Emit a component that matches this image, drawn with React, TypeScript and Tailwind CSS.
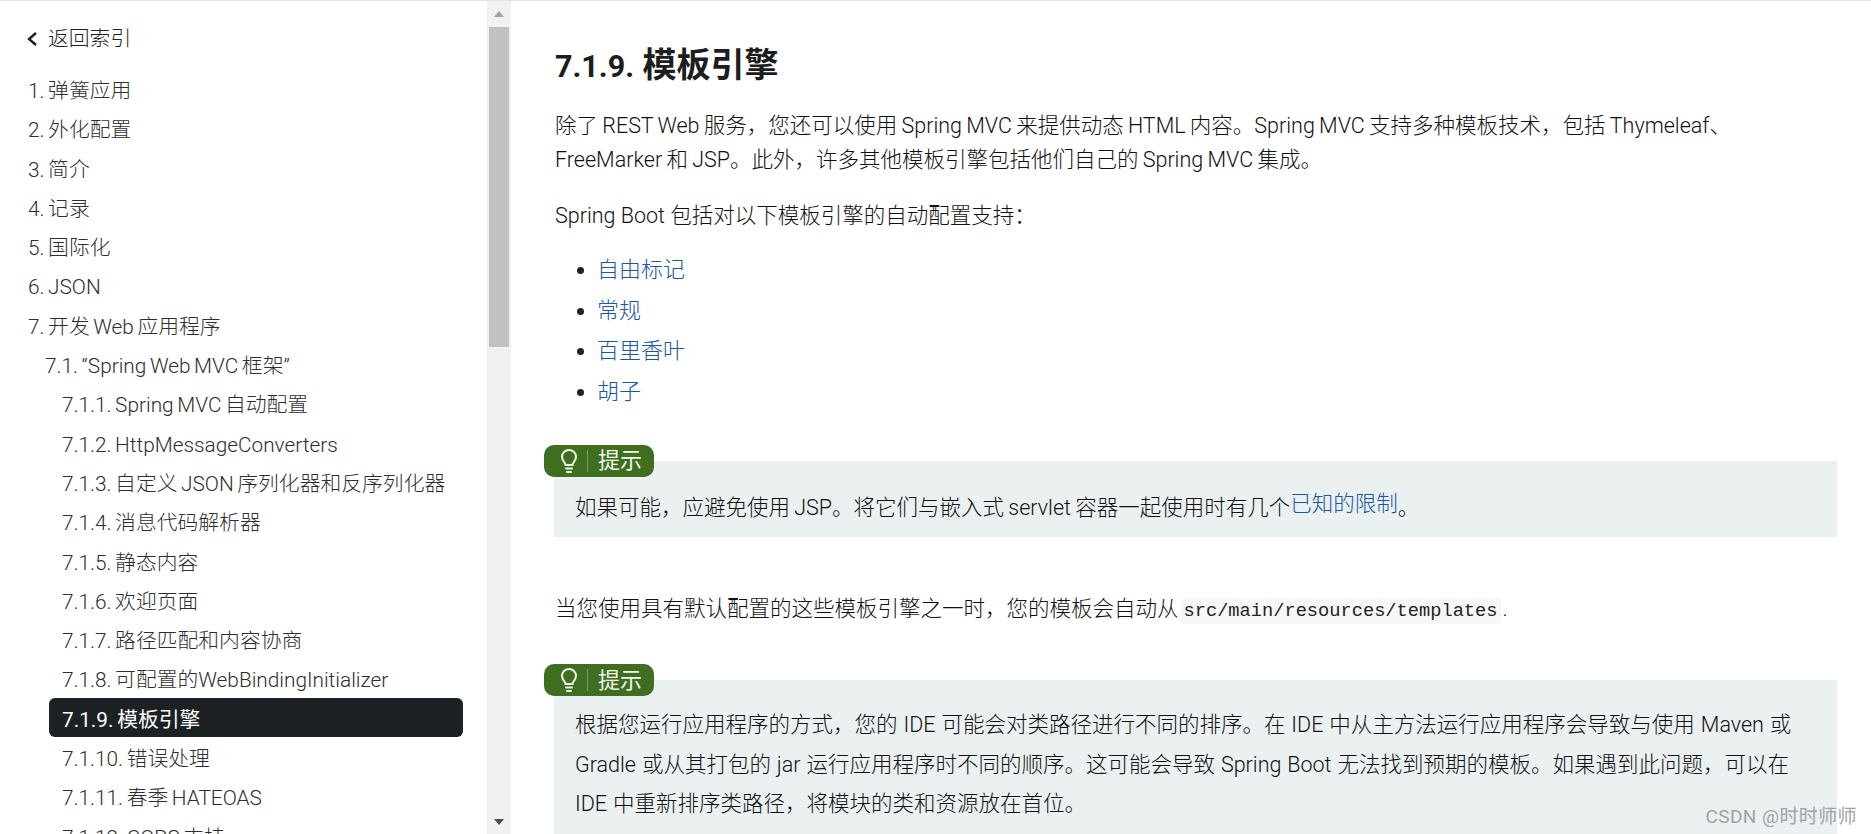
import { FC, ReactNode } from 'react';

const FONT = 'font-["Roboto","Noto_Sans_CJK_SC",sans-serif]';
const LINK = 'font-light text-[#1a55a6]';

type NavItem = { label: string; level: 0 | 1 | 2; active?: boolean };

const navItems: NavItem[] = [
  { label: '1. 弹簧应用', level: 0 },
  { label: '2. 外化配置', level: 0 },
  { label: '3. 简介', level: 0 },
  { label: '4. 记录', level: 0 },
  { label: '5. 国际化', level: 0 },
  { label: '6. JSON', level: 0 },
  { label: '7. 开发 Web 应用程序', level: 0 },
  { label: '7.1. “Spring Web MVC 框架”', level: 1 },
  { label: '7.1.1. Spring MVC 自动配置', level: 2 },
  { label: '7.1.2. HttpMessageConverters', level: 2 },
  { label: '7.1.3. 自定义 JSON 序列化器和反序列化器', level: 2 },
  { label: '7.1.4. 消息代码解析器', level: 2 },
  { label: '7.1.5. 静态内容', level: 2 },
  { label: '7.1.6. 欢迎页面', level: 2 },
  { label: '7.1.7. 路径匹配和内容协商', level: 2 },
  { label: '7.1.8. 可配置的WebBindingInitializer', level: 2 },
  { label: '7.1.9. 模板引擎', level: 2, active: true },
  { label: '7.1.10. 错误处理', level: 2 },
  { label: '7.1.11. 春季 HATEOAS', level: 2 },
  { label: '7.1.12. CORS 支持', level: 2 },
];

const Bulb: FC = () => (
  <svg width="20" height="26" viewBox="0 0 20 26" fill="none" stroke="#eef3e8" strokeWidth="2" strokeLinecap="round">
    <path d="M6.500 17c0-2.500-3.500-4-3.500-8.200C3 4.900 6 2 10 2s7 2.900 7 6.800C17 13 13.500 14.500 13.500 17z" />
    <path d="M7 20.500h6M8 24h4" />
  </svg>
);

const Tip: FC<{ children: ReactNode; className: string }> = ({ children, className }) => (
  <div className={`relative ml-[-1px] bg-[#ebf0f1] pl-[21px] pr-[30px] ${className}`}>
    <div className="absolute left-[-10px] top-[-16px] flex h-[32px] w-[110px] items-center rounded-[10px] bg-[#3f6e20] pl-[15px] text-[22px] font-normal text-[#f3f6ef] [word-spacing:0]">
      <Bulb />
      <span className="ml-[8px] mr-[10px] h-[22px] w-px bg-[#7c9c66]" />
      <span>提示</span>
    </div>
    {children}
  </div>
);

const Sidebar: FC = () => (
  <aside className="flex h-[834px] w-[511px] shrink-0 bg-white">
    <div className="h-full w-[487px] overflow-hidden">
      <div className="flex h-[71px] items-start pl-[26px] pt-[23px] text-[20.800px] font-light leading-[30px] text-[#222]">
        <svg width="13" height="30" viewBox="0 0 13 30" fill="none" stroke="#1d1f20" strokeWidth="2.400" className="mr-[9px]">
          <path d="M10 9l-7 6 7 6" />
        </svg>
        <span>返回索引</span>
      </div>
      <ul className="text-[20.800px] font-light leading-[39.300px] text-[#2e2e2e] [word-spacing:-1.500px]">
        {navItems.map((item) => (
          <li
            key={item.label}
            className={
              item.active
                ? 'ml-[49px] mr-[24px] mt-[-3px] mb-[3px] h-[39.300px] rounded-[6px] bg-[#1c2123] pl-[13px] pt-[3px] font-normal text-white'
                : item.level === 0
                  ? 'pl-[28px]'
                  : item.level === 1
                    ? 'pl-[45px]'
                    : 'pl-[62px]'
            }
          >
            {item.label}
          </li>
        ))}
      </ul>
    </div>
    <div className="flex h-full w-[24px] flex-col items-center bg-[#f1f1f1] px-px">
      <div className="flex h-[26px] w-full items-center justify-center">
        <span className="h-0 w-0 border-x-[5px] border-b-[6px] border-x-transparent border-b-[#a3a3a3]" />
      </div>
      <div className="h-[320px] w-[20px] bg-[#c1c1c1]" />
      <div className="flex-1" />
      <div className="flex h-[26px] w-full items-center justify-center">
        <span className="h-0 w-0 border-x-[5px] border-t-[6px] border-x-transparent border-t-[#505050]" />
      </div>
    </div>
  </aside>
);

export default function App() {
  return (
    <div className={`relative flex h-[834px] w-[1871px] overflow-hidden border-t border-[#e4e4e4] bg-white ${FONT}`}>
      <Sidebar />
      <main className="min-w-0 flex-1 pl-[44px] pr-[34px] text-[21.500px] font-light leading-[34px] text-[#111]">
        <h1 className="pt-[40px] text-[34px] font-bold leading-[48px] text-[#1d1d1d]">
          <span className="text-[30.500px]">7.1.9.</span> 模板引擎
        </h1>
        <p className="mt-[18px] [word-spacing:-1px]">
          除了 REST Web 服务，您还可以使用 Spring MVC 来提供动态 HTML 内容。Spring MVC 支持多种模板技术，包括 Thymeleaf、
          <br />
          FreeMarker 和 JSP。此外，许多其他模板引擎包括他们自己的 Spring MVC 集成。
        </p>
        <p className="mt-[22px]">Spring Boot 包括对以下模板引擎的自动配置支持：</p>
        <ul className="mt-[17px] list-disc pl-[42px] text-[22px] leading-[40.600px] marker:text-[#222]">
          <li><a className={LINK}>自由标记</a></li>
          <li><a className={LINK}>常规</a></li>
          <li><a className={LINK}>百里香叶</a></li>
          <li><a className={LINK}>胡子</a></li>
        </ul>
        <Tip className="mt-[49px] h-[76px] pt-[30px] [word-spacing:-1px]">
          如果可能，应避免使用 JSP。将它们与嵌入式 servlet 容器一起使用时有几个
          <a className={`relative top-[-4px] ${LINK}`}>已知的限制</a>。
        </Tip>
        <p className="mt-[55px]">
          当您使用具有默认配置的这些模板引擎之一时，您的模板会自动从
          <code className="mx-[2px] rounded-[4px] bg-[#f7f7f8] px-[3px] py-[2px] font-['Liberation_Mono',monospace] text-[18.700px] font-normal text-[#222]">
            src/main/resources/templates
          </code>
          .
        </p>
        <Tip className="mt-[52px] h-[160px] pt-[25px] leading-[39.300px] [word-spacing:0.700px]">
          根据您运行应用程序的方式，您的 IDE 可能会对类路径进行不同的排序。在 IDE 中从主方法运行应用程序会导致与使用 Maven 或
          <br />
          Gradle 或从其打包的 jar 运行应用程序时不同的顺序。这可能会导致 Spring Boot 无法找到预期的模板。如果遇到此问题，可以在
          <br />
          IDE 中重新排序类路径，将模块的类和资源放在首位。
        </Tip>
      </main>
      <div className="absolute bottom-[5px] right-[14px] text-[19px] leading-[24px] tracking-[0.4px] text-[#a0a4a6]">CSDN @时时师师</div>
    </div>
  );
}
